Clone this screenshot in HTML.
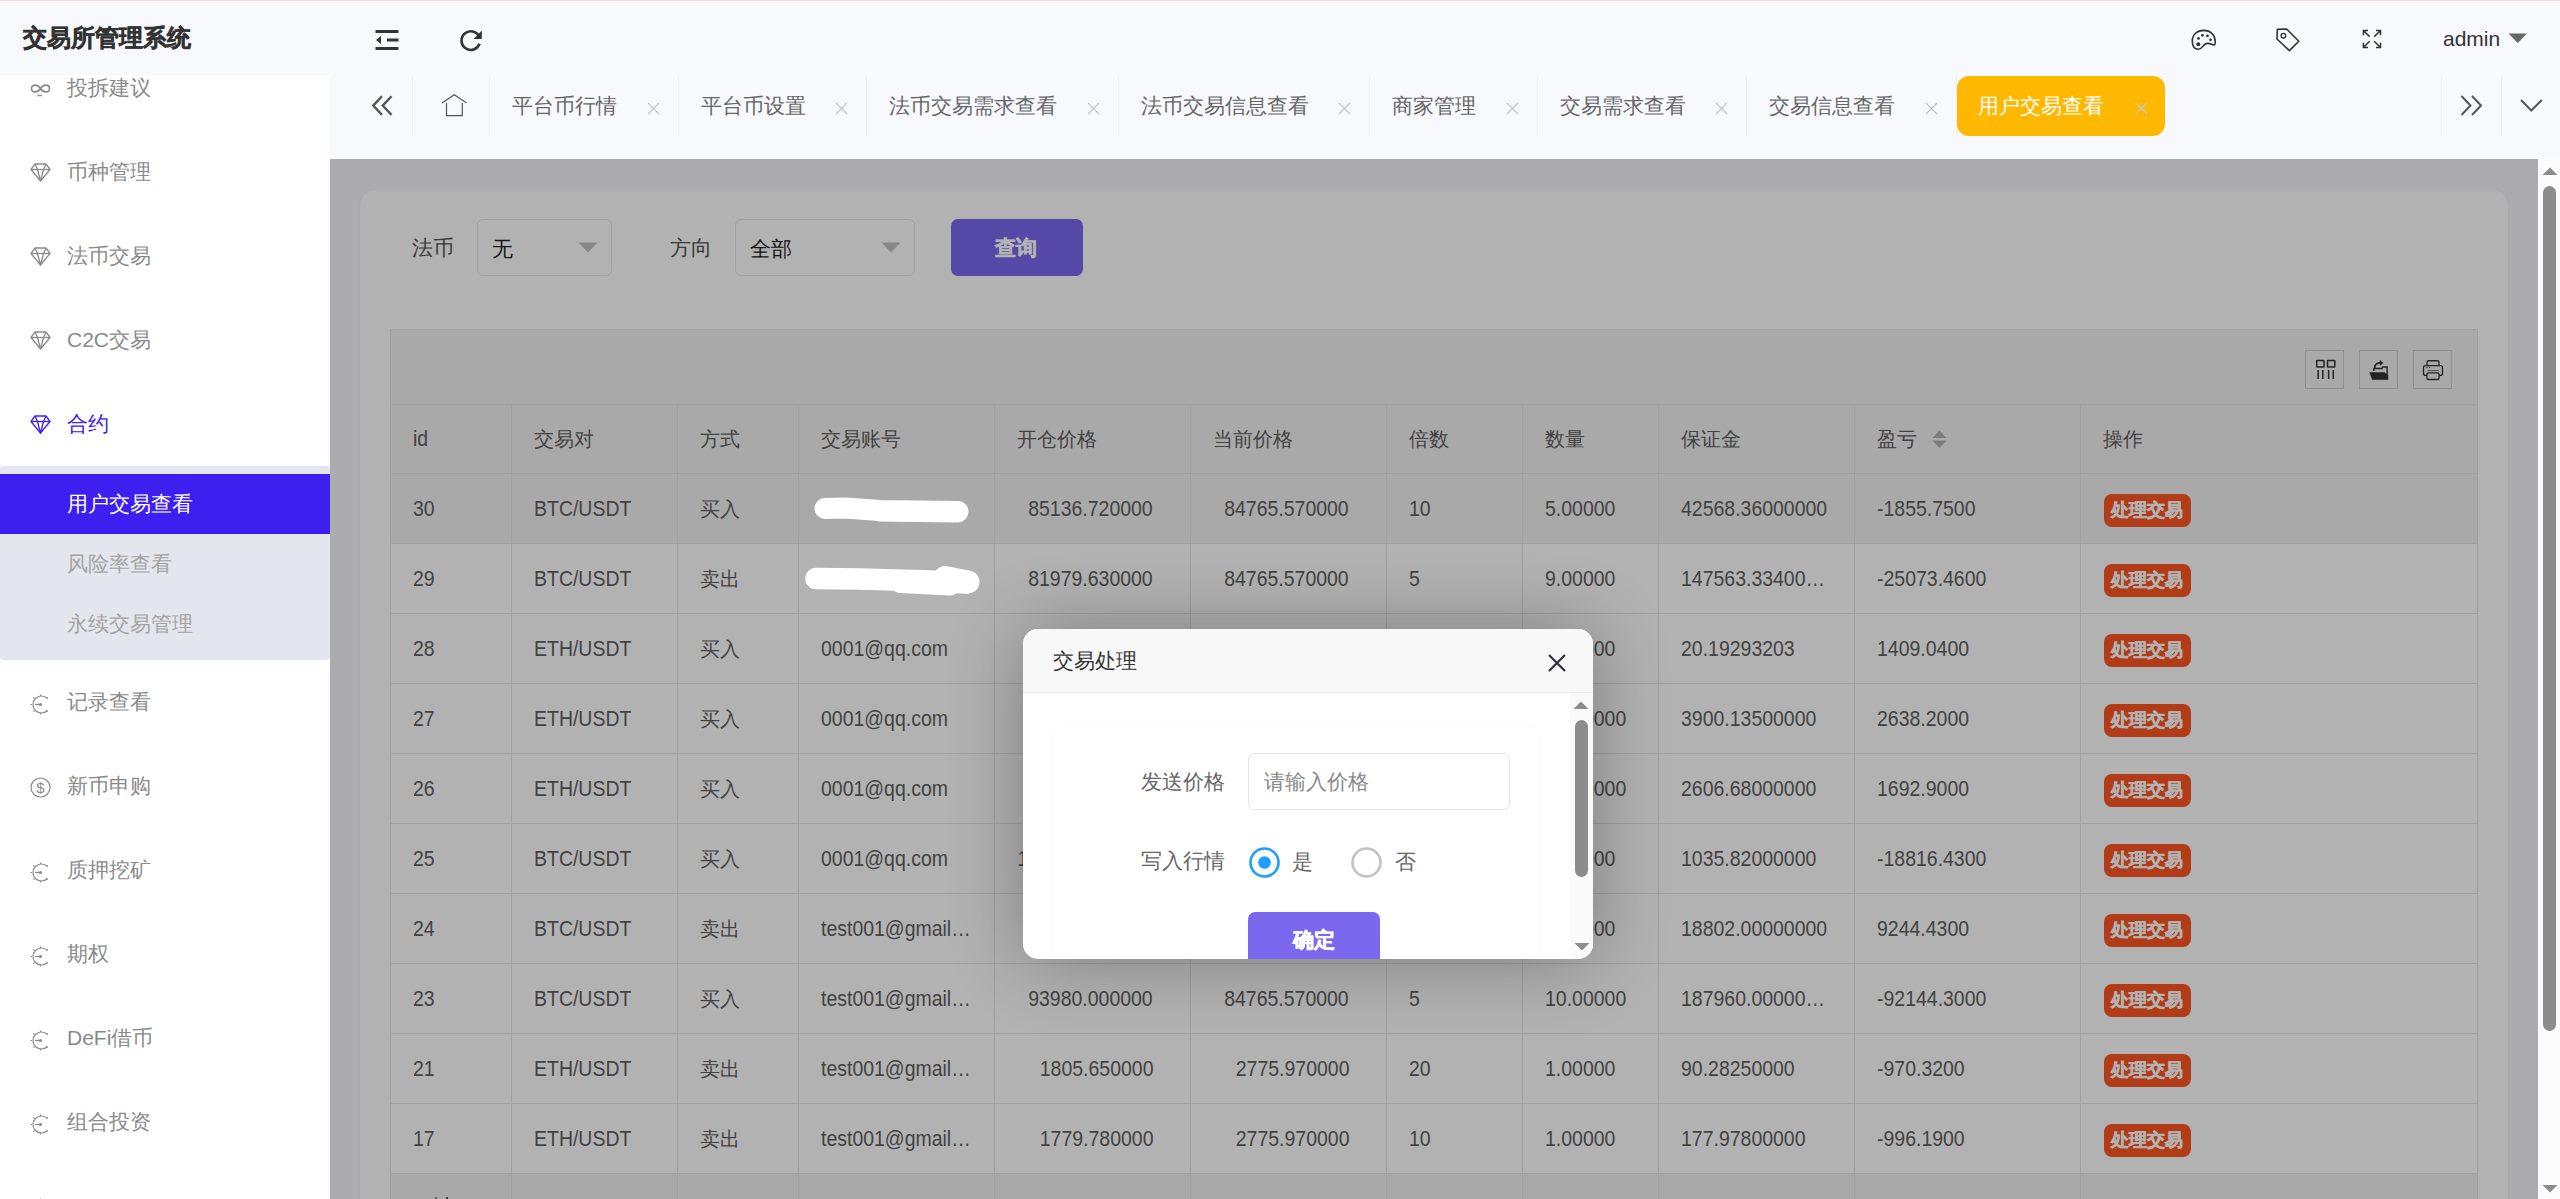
<!DOCTYPE html><html><head><meta charset="utf-8"><style>
*{margin:0;padding:0;box-sizing:border-box}
html,body{width:2560px;height:1199px;overflow:hidden;background:#fff;font-family:"Liberation Sans",sans-serif}
.t{position:absolute;white-space:nowrap}
.a{position:absolute}
svg{position:absolute;overflow:visible}
</style></head><body>
<div class="a" style="left:0;top:0;width:2560px;height:75px;background:#f8f9fd"></div>
<div class="a" style="left:0;top:0;width:2560px;height:1px;background:#f2d9dc"></div>
<div class="t" style="left:23px;top:20.875px;font-size:23.5px;line-height:35.25px;color:#333;font-weight:bold;-webkit-text-stroke:0.5px #333">交易所管理系统</div>
<svg style="left:375px;top:30px" width="24" height="20" viewBox="0 0 24 20"><rect x="0.5" y="0" width="23" height="3" fill="#333"/><rect x="12" y="8.5" width="11.5" height="3" fill="#333"/><path d="M1 10 L6 6 L6 14 Z" fill="#333"/><rect x="0.5" y="17" width="23" height="3" fill="#333"/></svg>
<svg style="left:459px;top:28px" width="26" height="24" viewBox="0 0 26 24"><path d="M20.2 8.5 A9.3 9.3 0 1 0 20.6 15.8" fill="none" stroke="#333" stroke-width="2.6"/><path d="M14.5 11 L22.8 11 L22.8 2.5 Z" fill="#333"/></svg>
<svg style="left:2185px;top:22px" width="40" height="34" viewBox="2185 22 40 34"><path d="M2198.5 49.3 C2194.5 49.3 2192.3 46 2192.3 41 C2192.3 34.5 2197 30.4 2204 30.4 C2210.5 30.4 2215.2 35 2215.2 41.5 C2215.2 43.5 2215 45 2214 45 C2212.5 45 2211 43.4 2207.5 43.4 C2203 43.4 2202.5 49.3 2198.5 49.3 Z" fill="none" stroke="#333" stroke-width="1.6"/><circle cx="2202.4" cy="35.3" r="1.4" fill="#333"/><circle cx="2207.5" cy="35.9" r="1.4" fill="#333"/><circle cx="2198.5" cy="38.4" r="1.4" fill="#333"/><circle cx="2210.5" cy="39.8" r="1.4" fill="#333"/><circle cx="2198.3" cy="44.2" r="2" fill="#333"/></svg>
<svg style="left:2268px;top:22px" width="40" height="34" viewBox="2268 22 40 34"><path d="M2277.3 29.4 L2286.6 29 L2298.8 41.3 L2289.4 50.6 L2277 39 Z" fill="none" stroke="#333" stroke-width="1.6" stroke-linejoin="round"/><circle cx="2283.4" cy="35.7" r="2.3" fill="none" stroke="#333" stroke-width="1.4"/></svg>
<svg style="left:2352px;top:22px" width="40" height="34" viewBox="2352 22 40 34"><g fill="none" stroke="#333" stroke-width="1.5"><path d="M2368 30.6 H2363.4 V35.2 M2363.6 30.8 L2369.6 36.6"/><path d="M2376 30.6 H2380.5 V35.2 M2380.3 30.8 L2374.2 36.6"/><path d="M2368 47.4 H2363.4 V42.8 M2363.6 47.2 L2369.6 41.3"/><path d="M2376 47.4 H2380.5 V42.8 M2380.3 47.2 L2374.2 41.3"/></g></svg>
<div class="t" style="left:2443px;top:23.25px;font-size:21px;line-height:31.5px;color:#333;font-weight:normal;">admin</div>
<svg style="left:2508px;top:33px" width="20" height="11" viewBox="0 0 20 11"><path d="M0.5 0.5 L19 0.5 L9.75 10 Z" fill="#666"/></svg>
<div class="a" style="left:0;top:75px;width:330px;height:1124px;background:#fff"></div>
<div class="a" style="left:0;top:466px;width:330px;height:194px;background:#e4e6ee;border-radius:3px"></div>
<div class="a" style="left:0;top:474px;width:330px;height:60px;background:#3d20f0"></div>
<svg style="left:30px;top:81.5px" width="21" height="16" viewBox="0 0 21 16"><path d="M10.5 6.5 C8 2 1.5 2 1.5 6.5 C1.5 11 8 11 10.5 6.5 C13 2 19.5 2 19.5 6.5 C19.5 11 13 11 10.5 6.5 Z" fill="none" stroke="#8a8a8a" stroke-width="1.6"/><path d="M7.5 13.5 H12" stroke="#8a8a8a" stroke-width="1.4"/></svg>
<div class="t" style="left:67px;top:71.75px;font-size:21px;line-height:31.5px;color:#8a8a8a;font-weight:normal;">投拆建议</div>
<svg style="left:30px;top:162.5px" width="21" height="19" viewBox="0 0 21 19"><g fill="none" stroke="#8a8a8a" stroke-width="1.3" stroke-linejoin="round"><path d="M5 1 H16 L20 6.5 L10.5 18 L1 6.5 Z"/><path d="M1 6.5 H20"/><path d="M5 1 L7.5 6.5 L10.5 18 L13.5 6.5 L16 1"/></g></svg>
<div class="t" style="left:67px;top:155.75px;font-size:21px;line-height:31.5px;color:#8a8a8a;font-weight:normal;">币种管理</div>
<svg style="left:30px;top:246.5px" width="21" height="19" viewBox="0 0 21 19"><g fill="none" stroke="#8a8a8a" stroke-width="1.3" stroke-linejoin="round"><path d="M5 1 H16 L20 6.5 L10.5 18 L1 6.5 Z"/><path d="M1 6.5 H20"/><path d="M5 1 L7.5 6.5 L10.5 18 L13.5 6.5 L16 1"/></g></svg>
<div class="t" style="left:67px;top:239.75px;font-size:21px;line-height:31.5px;color:#8a8a8a;font-weight:normal;">法币交易</div>
<svg style="left:30px;top:330.5px" width="21" height="19" viewBox="0 0 21 19"><g fill="none" stroke="#8a8a8a" stroke-width="1.3" stroke-linejoin="round"><path d="M5 1 H16 L20 6.5 L10.5 18 L1 6.5 Z"/><path d="M1 6.5 H20"/><path d="M5 1 L7.5 6.5 L10.5 18 L13.5 6.5 L16 1"/></g></svg>
<div class="t" style="left:67px;top:323.75px;font-size:21px;line-height:31.5px;color:#8a8a8a;font-weight:normal;">C2C交易</div>
<svg style="left:30px;top:414.5px" width="21" height="19" viewBox="0 0 21 19"><g fill="none" stroke="#3d20f0" stroke-width="1.3" stroke-linejoin="round"><path d="M5 1 H16 L20 6.5 L10.5 18 L1 6.5 Z"/><path d="M1 6.5 H20"/><path d="M5 1 L7.5 6.5 L10.5 18 L13.5 6.5 L16 1"/></g></svg>
<div class="t" style="left:67px;top:407.75px;font-size:21px;line-height:31.5px;color:#3d20f0;font-weight:normal;">合约</div>
<svg style="left:30px;top:693.5px" width="21" height="21" viewBox="0 0 21 21"><g fill="none" stroke="#8a8a8a" stroke-width="1.2"><path d="M17.5 4.5 A8.5 8.5 0 1 0 17.5 16.5"/><path d="M10.50 2.00 L10.50 0.50"/><path d="M4.49 4.49 L3.43 3.43"/><path d="M2.00 10.50 L0.50 10.50"/><path d="M4.49 16.51 L3.43 17.57"/><path d="M10.50 19.00 L10.50 20.50"/><path d="M16.51 4.49 L17.57 3.43"/><path d="M16.51 16.51 L17.57 17.57"/><path d="M5 10.5 H10"/></g><circle cx="10.5" cy="10.5" r="1.6" fill="#8a8a8a"/></svg>
<div class="t" style="left:67px;top:686.25px;font-size:21px;line-height:31.5px;color:#8a8a8a;font-weight:normal;">记录查看</div>
<svg style="left:30px;top:777px" width="21" height="21" viewBox="0 0 21 21"><circle cx="10.5" cy="10.5" r="9.5" fill="none" stroke="#8a8a8a" stroke-width="1.2"/><text x="10.5" y="15.5" text-anchor="middle" font-size="15" font-family="Liberation Sans" fill="#8a8a8a">$</text></svg>
<div class="t" style="left:67px;top:770.25px;font-size:21px;line-height:31.5px;color:#8a8a8a;font-weight:normal;">新币申购</div>
<svg style="left:30px;top:861.5px" width="21" height="21" viewBox="0 0 21 21"><g fill="none" stroke="#8a8a8a" stroke-width="1.2"><path d="M17.5 4.5 A8.5 8.5 0 1 0 17.5 16.5"/><path d="M10.50 2.00 L10.50 0.50"/><path d="M4.49 4.49 L3.43 3.43"/><path d="M2.00 10.50 L0.50 10.50"/><path d="M4.49 16.51 L3.43 17.57"/><path d="M10.50 19.00 L10.50 20.50"/><path d="M16.51 4.49 L17.57 3.43"/><path d="M16.51 16.51 L17.57 17.57"/><path d="M5 10.5 H10"/></g><circle cx="10.5" cy="10.5" r="1.6" fill="#8a8a8a"/></svg>
<div class="t" style="left:67px;top:854.25px;font-size:21px;line-height:31.5px;color:#8a8a8a;font-weight:normal;">质押挖矿</div>
<svg style="left:30px;top:945.5px" width="21" height="21" viewBox="0 0 21 21"><g fill="none" stroke="#8a8a8a" stroke-width="1.2"><path d="M17.5 4.5 A8.5 8.5 0 1 0 17.5 16.5"/><path d="M10.50 2.00 L10.50 0.50"/><path d="M4.49 4.49 L3.43 3.43"/><path d="M2.00 10.50 L0.50 10.50"/><path d="M4.49 16.51 L3.43 17.57"/><path d="M10.50 19.00 L10.50 20.50"/><path d="M16.51 4.49 L17.57 3.43"/><path d="M16.51 16.51 L17.57 17.57"/><path d="M5 10.5 H10"/></g><circle cx="10.5" cy="10.5" r="1.6" fill="#8a8a8a"/></svg>
<div class="t" style="left:67px;top:938.25px;font-size:21px;line-height:31.5px;color:#8a8a8a;font-weight:normal;">期权</div>
<svg style="left:30px;top:1029.5px" width="21" height="21" viewBox="0 0 21 21"><g fill="none" stroke="#8a8a8a" stroke-width="1.2"><path d="M17.5 4.5 A8.5 8.5 0 1 0 17.5 16.5"/><path d="M10.50 2.00 L10.50 0.50"/><path d="M4.49 4.49 L3.43 3.43"/><path d="M2.00 10.50 L0.50 10.50"/><path d="M4.49 16.51 L3.43 17.57"/><path d="M10.50 19.00 L10.50 20.50"/><path d="M16.51 4.49 L17.57 3.43"/><path d="M16.51 16.51 L17.57 17.57"/><path d="M5 10.5 H10"/></g><circle cx="10.5" cy="10.5" r="1.6" fill="#8a8a8a"/></svg>
<div class="t" style="left:67px;top:1022.25px;font-size:21px;line-height:31.5px;color:#8a8a8a;font-weight:normal;">DeFi借币</div>
<svg style="left:30px;top:1113.5px" width="21" height="21" viewBox="0 0 21 21"><g fill="none" stroke="#8a8a8a" stroke-width="1.2"><path d="M17.5 4.5 A8.5 8.5 0 1 0 17.5 16.5"/><path d="M10.50 2.00 L10.50 0.50"/><path d="M4.49 4.49 L3.43 3.43"/><path d="M2.00 10.50 L0.50 10.50"/><path d="M4.49 16.51 L3.43 17.57"/><path d="M10.50 19.00 L10.50 20.50"/><path d="M16.51 4.49 L17.57 3.43"/><path d="M16.51 16.51 L17.57 17.57"/><path d="M5 10.5 H10"/></g><circle cx="10.5" cy="10.5" r="1.6" fill="#8a8a8a"/></svg>
<div class="t" style="left:67px;top:1106.25px;font-size:21px;line-height:31.5px;color:#8a8a8a;font-weight:normal;">组合投资</div>
<svg style="left:30px;top:1197.5px" width="21" height="21" viewBox="0 0 21 21"><g fill="none" stroke="#8a8a8a" stroke-width="1.2"><path d="M17.5 4.5 A8.5 8.5 0 1 0 17.5 16.5"/><path d="M10.50 2.00 L10.50 0.50"/><path d="M4.49 4.49 L3.43 3.43"/><path d="M2.00 10.50 L0.50 10.50"/><path d="M4.49 16.51 L3.43 17.57"/><path d="M10.50 19.00 L10.50 20.50"/><path d="M16.51 4.49 L17.57 3.43"/><path d="M16.51 16.51 L17.57 17.57"/><path d="M5 10.5 H10"/></g><circle cx="10.5" cy="10.5" r="1.6" fill="#8a8a8a"/></svg>
<div class="t" style="left:67px;top:488.25px;font-size:21px;line-height:31.5px;color:#fff;font-weight:normal;">用户交易查看</div>
<div class="t" style="left:67px;top:547.75px;font-size:21px;line-height:31.5px;color:#a3a3a3;font-weight:normal;">风险率查看</div>
<div class="t" style="left:67px;top:607.75px;font-size:21px;line-height:31.5px;color:#a3a3a3;font-weight:normal;">永续交易管理</div>
<div class="a" style="left:0;top:0;width:330px;height:75px;background:#f8f9fd"></div>
<div class="t" style="left:23px;top:20.875px;font-size:23.5px;line-height:35.25px;color:#333;font-weight:bold;-webkit-text-stroke:0.5px #333">交易所管理系统</div>
<div class="a" style="left:0;top:0;width:330px;height:1px;background:#f2d9dc"></div>
<div class="a" style="left:330px;top:75px;width:2230px;height:84px;background:#f8f9fd"></div>
<div class="a" style="left:412px;top:76px;width:1px;height:60px;background:#efefef"></div>
<div class="a" style="left:489px;top:76px;width:1px;height:60px;background:#efefef"></div>
<svg style="left:371px;top:95px" width="23" height="22" viewBox="0 0 23 22"><g fill="none" stroke="#555" stroke-width="2.3"><path d="M11 1.3 L2.2 10.6 L11 19.9"/><path d="M20.5 1.3 L11.7 10.6 L20.5 19.9"/></g></svg>
<svg style="left:441px;top:94px" width="27" height="23" viewBox="0 0 27 23"><g fill="none" stroke="#555" stroke-width="1.2"><path d="M1 9 L13.3 0.8 L25.6 9"/><path d="M5.5 9 V21.7 H21.3 V9"/></g></svg>
<div class="t" style="left:512.0px;top:90.25px;font-size:21px;line-height:31.5px;color:#666;font-weight:normal;">平台币行情</div>
<svg style="left:646.57px;top:101.5px" width="13" height="13" viewBox="0 0 13 13"><path d="M1 1 L12 12 M12 1 L1 12" stroke="#c4c4c4" stroke-width="1.2"/></svg>
<div class="a" style="left:678px;top:76px;width:1px;height:60px;background:#efefef"></div>
<div class="t" style="left:700.5699999999999px;top:90.25px;font-size:21px;line-height:31.5px;color:#666;font-weight:normal;">平台币设置</div>
<svg style="left:835.14px;top:101.5px" width="13" height="13" viewBox="0 0 13 13"><path d="M1 1 L12 12 M12 1 L1 12" stroke="#c4c4c4" stroke-width="1.2"/></svg>
<div class="a" style="left:866px;top:76px;width:1px;height:60px;background:#efefef"></div>
<div class="t" style="left:889.1399999999999px;top:90.25px;font-size:21px;line-height:31.5px;color:#666;font-weight:normal;">法币交易需求查看</div>
<svg style="left:1086.71px;top:101.5px" width="13" height="13" viewBox="0 0 13 13"><path d="M1 1 L12 12 M12 1 L1 12" stroke="#c4c4c4" stroke-width="1.2"/></svg>
<div class="a" style="left:1118px;top:76px;width:1px;height:60px;background:#efefef"></div>
<div class="t" style="left:1140.7099999999998px;top:90.25px;font-size:21px;line-height:31.5px;color:#666;font-weight:normal;">法币交易信息查看</div>
<svg style="left:1338.28px;top:101.5px" width="13" height="13" viewBox="0 0 13 13"><path d="M1 1 L12 12 M12 1 L1 12" stroke="#c4c4c4" stroke-width="1.2"/></svg>
<div class="a" style="left:1369px;top:76px;width:1px;height:60px;background:#efefef"></div>
<div class="t" style="left:1392.2799999999997px;top:90.25px;font-size:21px;line-height:31.5px;color:#666;font-weight:normal;">商家管理</div>
<svg style="left:1505.85px;top:101.5px" width="13" height="13" viewBox="0 0 13 13"><path d="M1 1 L12 12 M12 1 L1 12" stroke="#c4c4c4" stroke-width="1.2"/></svg>
<div class="a" style="left:1537px;top:76px;width:1px;height:60px;background:#efefef"></div>
<div class="t" style="left:1559.8499999999997px;top:90.25px;font-size:21px;line-height:31.5px;color:#666;font-weight:normal;">交易需求查看</div>
<svg style="left:1715.42px;top:101.5px" width="13" height="13" viewBox="0 0 13 13"><path d="M1 1 L12 12 M12 1 L1 12" stroke="#c4c4c4" stroke-width="1.2"/></svg>
<div class="a" style="left:1746px;top:76px;width:1px;height:60px;background:#efefef"></div>
<div class="t" style="left:1769.4199999999996px;top:90.25px;font-size:21px;line-height:31.5px;color:#666;font-weight:normal;">交易信息查看</div>
<svg style="left:1924.99px;top:101.5px" width="13" height="13" viewBox="0 0 13 13"><path d="M1 1 L12 12 M12 1 L1 12" stroke="#c4c4c4" stroke-width="1.2"/></svg>
<div class="a" style="left:1956px;top:76px;width:1px;height:60px;background:#efefef"></div>
<div class="a" style="left:1957px;top:76px;width:208px;height:60px;background:#ffb800;border-radius:12px"></div>
<div class="t" style="left:1978px;top:90.25px;font-size:21px;line-height:31.5px;color:#fff;font-weight:normal;">用户交易查看</div>
<svg style="left:2134.5px;top:101.5px" width="13" height="13" viewBox="0 0 13 13"><path d="M1 1 L12 12 M12 1 L1 12" stroke="#c9c9c9" stroke-width="1.3"/></svg>
<div class="a" style="left:2441px;top:76px;width:1px;height:60px;background:#efefef"></div>
<div class="a" style="left:2501px;top:76px;width:1px;height:60px;background:#efefef"></div>
<svg style="left:2460px;top:95px" width="23" height="22" viewBox="0 0 23 22"><g fill="none" stroke="#555" stroke-width="2"><path d="M1.5 1 L10.5 10.5 L1.5 20"/><path d="M12 1 L21 10.5 L12 20"/></g></svg>
<svg style="left:2520px;top:99px" width="23" height="14" viewBox="0 0 23 14"><path d="M1 1 L11.3 11.5 L21.8 1" fill="none" stroke="#555" stroke-width="2"/></svg>
<div class="a" style="left:330px;top:159px;width:2208px;height:1040px;background:#f6f6f9;overflow:hidden">
<div class="a" style="left:29px;top:30px;width:2150px;height:1200px;background:#fff;border:1px solid #f3f4f8;border-radius:17px"></div>
<div class="t" style="left:82px;top:72.75px;font-size:21px;line-height:31.5px;color:#555;font-weight:normal;">法币</div>
<div class="a" style="left:147px;top:60px;width:135px;height:57px;border:1px solid #e6e6e6;border-radius:6px;background:#fff"></div>
<div class="t" style="left:162px;top:73.75px;font-size:21px;line-height:31.5px;color:#222;font-weight:normal;">无</div>
<svg style="left:248px;top:83px" width="20" height="11" viewBox="0 0 20 11"><path d="M0.5 0.5 L19.5 0.5 L10 10.5 Z" fill="#c2c2c2"/></svg>
<div class="t" style="left:340px;top:72.75px;font-size:21px;line-height:31.5px;color:#555;font-weight:normal;">方向</div>
<div class="a" style="left:405px;top:60px;width:180px;height:57px;border:1px solid #e6e6e6;border-radius:6px;background:#fff"></div>
<div class="t" style="left:420px;top:73.75px;font-size:21px;line-height:31.5px;color:#222;font-weight:normal;">全部</div>
<svg style="left:551px;top:83px" width="20" height="11" viewBox="0 0 20 11"><path d="M0.5 0.5 L19.5 0.5 L10 10.5 Z" fill="#c2c2c2"/></svg>
<div class="a" style="left:621px;top:60px;width:132px;height:57px;border-radius:7px;background:#7b68ee"></div>
<div class="t" style="left:665px;top:72.75px;font-size:21px;line-height:31.5px;color:#fff;font-weight:bold;-webkit-text-stroke:0.5px #fff">查询</div>
<div class="a" style="left:60px;top:170px;width:2088px;height:75px;background:#f2f2f2;border:1px solid #e6e6e6;border-bottom:none"></div>
<div class="a" style="left:1975px;top:191px;width:39px;height:39px;border:1px solid #ccc"></div>
<div class="a" style="left:2029px;top:191px;width:39px;height:39px;border:1px solid #ccc"></div>
<div class="a" style="left:2083px;top:191px;width:39px;height:39px;border:1px solid #ccc"></div>
<svg style="left:1980px;top:196px" width="30" height="30" viewBox="2310 355 30 30"><g fill="none" stroke="#333" stroke-width="1.5"><rect x="2316.7" y="360.5" width="7.3" height="6.6" rx="0.6"/><rect x="2327.5" y="360.5" width="7.3" height="6.6" rx="0.6"/></g><g stroke="#333" stroke-width="1.5"><path d="M2318.1 370 V379 M2322.8 370 V379 M2328.6 370 V379 M2333.3 370 V379"/></g></svg>
<svg style="left:2034px;top:196px" width="30" height="30" viewBox="2364 355 30 30"><path d="M2373.8 371 V368.5 H2382 L2382.6 367 H2387.1 V379" fill="none" stroke="#333" stroke-width="1.4"/><path d="M2369.7 372.6 H2384.2 L2387.9 375 V379.6 H2372.3 Z" fill="#333" stroke="#333" stroke-width="0.6" stroke-linejoin="round"/><path d="M2375 368 C2374.3 364.5 2377 362.8 2380.6 362.8" fill="none" stroke="#333" stroke-width="1.7"/><path d="M2379.8 359.8 L2383.3 362.9 L2379.8 366 Z" fill="#333"/></svg>
<svg style="left:2088px;top:196px" width="30" height="30" viewBox="2418 355 30 30"><g fill="none" stroke="#333" stroke-width="1.35"><path d="M2427 365.5 V362.5 Q2427 360.7 2428.8 360.7 H2437.2 Q2439 360.7 2439 362.5 V365.5"/><rect x="2423.5" y="365.6" width="19" height="9.8" rx="2"/></g><rect x="2426.9" y="372.9" width="12.2" height="6.6" rx="1.6" fill="#f2f2f2" stroke="#333" stroke-width="1.35"/><path d="M2426.3 367.6 H2427.6 M2428.9 367.6 H2430.2" stroke="#333" stroke-width="0.9"/><path d="M2427.5 370.6 H2439" stroke="#333" stroke-width="0.7"/></svg>
<div class="a" style="left:60px;top:245px;width:2088px;height:70px;background:#f2f2f2;border:1px solid #e6e6e6"></div>
<div class="t" style="left:83px;top:263.0px;font-size:22px;line-height:33px;color:#5f5f5f;transform:scaleX(0.885);transform-origin:0 50%">id</div>
<div class="t" style="left:204px;top:265.875px;font-size:19.5px;line-height:29.25px;color:#5f5f5f;font-weight:normal;">交易对</div>
<div class="t" style="left:370px;top:265.875px;font-size:19.5px;line-height:29.25px;color:#5f5f5f;font-weight:normal;">方式</div>
<div class="t" style="left:491px;top:265.875px;font-size:19.5px;line-height:29.25px;color:#5f5f5f;font-weight:normal;">交易账号</div>
<div class="t" style="left:687px;top:265.875px;font-size:19.5px;line-height:29.25px;color:#5f5f5f;font-weight:normal;">开仓价格</div>
<div class="t" style="left:883px;top:265.875px;font-size:19.5px;line-height:29.25px;color:#5f5f5f;font-weight:normal;">当前价格</div>
<div class="t" style="left:1079px;top:265.875px;font-size:19.5px;line-height:29.25px;color:#5f5f5f;font-weight:normal;">倍数</div>
<div class="t" style="left:1215px;top:265.875px;font-size:19.5px;line-height:29.25px;color:#5f5f5f;font-weight:normal;">数量</div>
<div class="t" style="left:1351px;top:265.875px;font-size:19.5px;line-height:29.25px;color:#5f5f5f;font-weight:normal;">保证金</div>
<div class="t" style="left:1547px;top:265.875px;font-size:19.5px;line-height:29.25px;color:#5f5f5f;font-weight:normal;">盈亏</div>
<div class="t" style="left:1773px;top:265.875px;font-size:19.5px;line-height:29.25px;color:#5f5f5f;font-weight:normal;">操作</div>
<svg style="left:1602px;top:271px" width="15" height="19" viewBox="0 0 15 19"><path d="M0.5 8 L7.5 0.5 L14.5 8 Z M0.5 10.5 L14.5 10.5 L7.5 18 Z" fill="#b2b2b2"/></svg>
<div class="a" style="left:60px;top:314px;width:2088px;height:71px;background:#f2f2f2;border:1px solid #e6e6e6"></div>
<div class="t" style="left:83px;top:333.0px;font-size:22px;line-height:33px;color:#5f5f5f;transform:scaleX(0.885);transform-origin:0 50%">30</div>
<div class="t" style="left:204px;top:333.0px;font-size:22px;line-height:33px;color:#5f5f5f;transform:scaleX(0.885);transform-origin:0 50%">BTC/USDT</div>
<div class="t" style="left:370px;top:335.875px;font-size:19.5px;line-height:29.25px;color:#5f5f5f;font-weight:normal;">买入</div>
<div class="t" style="left:664px;width:159px;text-align:right;top:333.0px;font-size:22px;line-height:33px;color:#5f5f5f"><span style="display:inline-block;transform:scaleX(0.885);transform-origin:100% 50%">85136.720000</span></div>
<div class="t" style="left:860px;width:159px;text-align:right;top:333.0px;font-size:22px;line-height:33px;color:#5f5f5f"><span style="display:inline-block;transform:scaleX(0.885);transform-origin:100% 50%">84765.570000</span></div>
<div class="t" style="left:1079px;top:333.0px;font-size:22px;line-height:33px;color:#5f5f5f;transform:scaleX(0.885);transform-origin:0 50%">10</div>
<div class="t" style="left:1215px;top:333.0px;font-size:22px;line-height:33px;color:#5f5f5f;transform:scaleX(0.885);transform-origin:0 50%">5.00000</div>
<div class="t" style="left:1351px;top:333.0px;font-size:22px;line-height:33px;color:#5f5f5f;transform:scaleX(0.885);transform-origin:0 50%">42568.36000000</div>
<div class="t" style="left:1547px;top:333.0px;font-size:22px;line-height:33px;color:#5f5f5f;transform:scaleX(0.885);transform-origin:0 50%">-1855.7500</div>
<div class="a" style="left:1774px;top:335px;width:87px;height:33px;background:#ff5722;border-radius:8px"></div>
<div class="t" style="left:1781px;top:337.5px;font-size:18px;line-height:27.0px;color:#fff;font-weight:bold;-webkit-text-stroke:0.5px #fff">处理交易</div>
<div class="a" style="left:60px;top:384px;width:2088px;height:71px;background:#fff;border:1px solid #e6e6e6"></div>
<div class="t" style="left:83px;top:403.0px;font-size:22px;line-height:33px;color:#5f5f5f;transform:scaleX(0.885);transform-origin:0 50%">29</div>
<div class="t" style="left:204px;top:403.0px;font-size:22px;line-height:33px;color:#5f5f5f;transform:scaleX(0.885);transform-origin:0 50%">BTC/USDT</div>
<div class="t" style="left:370px;top:405.875px;font-size:19.5px;line-height:29.25px;color:#5f5f5f;font-weight:normal;">卖出</div>
<div class="t" style="left:664px;width:159px;text-align:right;top:403.0px;font-size:22px;line-height:33px;color:#5f5f5f"><span style="display:inline-block;transform:scaleX(0.885);transform-origin:100% 50%">81979.630000</span></div>
<div class="t" style="left:860px;width:159px;text-align:right;top:403.0px;font-size:22px;line-height:33px;color:#5f5f5f"><span style="display:inline-block;transform:scaleX(0.885);transform-origin:100% 50%">84765.570000</span></div>
<div class="t" style="left:1079px;top:403.0px;font-size:22px;line-height:33px;color:#5f5f5f;transform:scaleX(0.885);transform-origin:0 50%">5</div>
<div class="t" style="left:1215px;top:403.0px;font-size:22px;line-height:33px;color:#5f5f5f;transform:scaleX(0.885);transform-origin:0 50%">9.00000</div>
<div class="t" style="left:1351px;top:403.0px;font-size:22px;line-height:33px;color:#5f5f5f;transform:scaleX(0.885);transform-origin:0 50%">147563.33400…</div>
<div class="t" style="left:1547px;top:403.0px;font-size:22px;line-height:33px;color:#5f5f5f;transform:scaleX(0.885);transform-origin:0 50%">-25073.4600</div>
<div class="a" style="left:1774px;top:405px;width:87px;height:33px;background:#ff5722;border-radius:8px"></div>
<div class="t" style="left:1781px;top:407.5px;font-size:18px;line-height:27.0px;color:#fff;font-weight:bold;-webkit-text-stroke:0.5px #fff">处理交易</div>
<div class="a" style="left:60px;top:454px;width:2088px;height:71px;background:#fff;border:1px solid #e6e6e6"></div>
<div class="t" style="left:83px;top:473.0px;font-size:22px;line-height:33px;color:#5f5f5f;transform:scaleX(0.885);transform-origin:0 50%">28</div>
<div class="t" style="left:204px;top:473.0px;font-size:22px;line-height:33px;color:#5f5f5f;transform:scaleX(0.885);transform-origin:0 50%">ETH/USDT</div>
<div class="t" style="left:370px;top:475.875px;font-size:19.5px;line-height:29.25px;color:#5f5f5f;font-weight:normal;">买入</div>
<div class="t" style="left:491px;top:473.0px;font-size:22px;line-height:33px;color:#5f5f5f;transform:scaleX(0.885);transform-origin:0 50%">0001@qq.com</div>
<div class="t" style="left:664px;width:159px;text-align:right;top:473.0px;font-size:22px;line-height:33px;color:#5f5f5f"><span style="display:inline-block;transform:scaleX(0.885);transform-origin:100% 50%">2019.293200</span></div>
<div class="t" style="left:860px;width:159px;text-align:right;top:473.0px;font-size:22px;line-height:33px;color:#5f5f5f"><span style="display:inline-block;transform:scaleX(0.885);transform-origin:100% 50%">2775.970000</span></div>
<div class="t" style="left:1079px;top:473.0px;font-size:22px;line-height:33px;color:#5f5f5f;transform:scaleX(0.885);transform-origin:0 50%">5</div>
<div class="t" style="left:1215px;top:473.0px;font-size:22px;line-height:33px;color:#5f5f5f;transform:scaleX(0.885);transform-origin:0 50%">1.00000</div>
<div class="t" style="left:1351px;top:473.0px;font-size:22px;line-height:33px;color:#5f5f5f;transform:scaleX(0.885);transform-origin:0 50%">20.19293203</div>
<div class="t" style="left:1547px;top:473.0px;font-size:22px;line-height:33px;color:#5f5f5f;transform:scaleX(0.885);transform-origin:0 50%">1409.0400</div>
<div class="a" style="left:1774px;top:475px;width:87px;height:33px;background:#ff5722;border-radius:8px"></div>
<div class="t" style="left:1781px;top:477.5px;font-size:18px;line-height:27.0px;color:#fff;font-weight:bold;-webkit-text-stroke:0.5px #fff">处理交易</div>
<div class="a" style="left:60px;top:524px;width:2088px;height:71px;background:#fff;border:1px solid #e6e6e6"></div>
<div class="t" style="left:83px;top:543.0px;font-size:22px;line-height:33px;color:#5f5f5f;transform:scaleX(0.885);transform-origin:0 50%">27</div>
<div class="t" style="left:204px;top:543.0px;font-size:22px;line-height:33px;color:#5f5f5f;transform:scaleX(0.885);transform-origin:0 50%">ETH/USDT</div>
<div class="t" style="left:370px;top:545.875px;font-size:19.5px;line-height:29.25px;color:#5f5f5f;font-weight:normal;">买入</div>
<div class="t" style="left:491px;top:543.0px;font-size:22px;line-height:33px;color:#5f5f5f;transform:scaleX(0.885);transform-origin:0 50%">0001@qq.com</div>
<div class="t" style="left:664px;width:159px;text-align:right;top:543.0px;font-size:22px;line-height:33px;color:#5f5f5f"><span style="display:inline-block;transform:scaleX(0.885);transform-origin:100% 50%">1950.067500</span></div>
<div class="t" style="left:860px;width:159px;text-align:right;top:543.0px;font-size:22px;line-height:33px;color:#5f5f5f"><span style="display:inline-block;transform:scaleX(0.885);transform-origin:100% 50%">2775.970000</span></div>
<div class="t" style="left:1079px;top:543.0px;font-size:22px;line-height:33px;color:#5f5f5f;transform:scaleX(0.885);transform-origin:0 50%">5</div>
<div class="t" style="left:1215px;top:543.0px;font-size:22px;line-height:33px;color:#5f5f5f;transform:scaleX(0.885);transform-origin:0 50%">10.00000</div>
<div class="t" style="left:1351px;top:543.0px;font-size:22px;line-height:33px;color:#5f5f5f;transform:scaleX(0.885);transform-origin:0 50%">3900.13500000</div>
<div class="t" style="left:1547px;top:543.0px;font-size:22px;line-height:33px;color:#5f5f5f;transform:scaleX(0.885);transform-origin:0 50%">2638.2000</div>
<div class="a" style="left:1774px;top:545px;width:87px;height:33px;background:#ff5722;border-radius:8px"></div>
<div class="t" style="left:1781px;top:547.5px;font-size:18px;line-height:27.0px;color:#fff;font-weight:bold;-webkit-text-stroke:0.5px #fff">处理交易</div>
<div class="a" style="left:60px;top:594px;width:2088px;height:71px;background:#fff;border:1px solid #e6e6e6"></div>
<div class="t" style="left:83px;top:613.0px;font-size:22px;line-height:33px;color:#5f5f5f;transform:scaleX(0.885);transform-origin:0 50%">26</div>
<div class="t" style="left:204px;top:613.0px;font-size:22px;line-height:33px;color:#5f5f5f;transform:scaleX(0.885);transform-origin:0 50%">ETH/USDT</div>
<div class="t" style="left:370px;top:615.875px;font-size:19.5px;line-height:29.25px;color:#5f5f5f;font-weight:normal;">买入</div>
<div class="t" style="left:491px;top:613.0px;font-size:22px;line-height:33px;color:#5f5f5f;transform:scaleX(0.885);transform-origin:0 50%">0001@qq.com</div>
<div class="t" style="left:664px;width:159px;text-align:right;top:613.0px;font-size:22px;line-height:33px;color:#5f5f5f"><span style="display:inline-block;transform:scaleX(0.885);transform-origin:100% 50%">1303.340000</span></div>
<div class="t" style="left:860px;width:159px;text-align:right;top:613.0px;font-size:22px;line-height:33px;color:#5f5f5f"><span style="display:inline-block;transform:scaleX(0.885);transform-origin:100% 50%">2775.970000</span></div>
<div class="t" style="left:1079px;top:613.0px;font-size:22px;line-height:33px;color:#5f5f5f;transform:scaleX(0.885);transform-origin:0 50%">5</div>
<div class="t" style="left:1215px;top:613.0px;font-size:22px;line-height:33px;color:#5f5f5f;transform:scaleX(0.885);transform-origin:0 50%">10.00000</div>
<div class="t" style="left:1351px;top:613.0px;font-size:22px;line-height:33px;color:#5f5f5f;transform:scaleX(0.885);transform-origin:0 50%">2606.68000000</div>
<div class="t" style="left:1547px;top:613.0px;font-size:22px;line-height:33px;color:#5f5f5f;transform:scaleX(0.885);transform-origin:0 50%">1692.9000</div>
<div class="a" style="left:1774px;top:615px;width:87px;height:33px;background:#ff5722;border-radius:8px"></div>
<div class="t" style="left:1781px;top:617.5px;font-size:18px;line-height:27.0px;color:#fff;font-weight:bold;-webkit-text-stroke:0.5px #fff">处理交易</div>
<div class="a" style="left:60px;top:664px;width:2088px;height:71px;background:#fff;border:1px solid #e6e6e6"></div>
<div class="t" style="left:83px;top:683.0px;font-size:22px;line-height:33px;color:#5f5f5f;transform:scaleX(0.885);transform-origin:0 50%">25</div>
<div class="t" style="left:204px;top:683.0px;font-size:22px;line-height:33px;color:#5f5f5f;transform:scaleX(0.885);transform-origin:0 50%">BTC/USDT</div>
<div class="t" style="left:370px;top:685.875px;font-size:19.5px;line-height:29.25px;color:#5f5f5f;font-weight:normal;">买入</div>
<div class="t" style="left:491px;top:683.0px;font-size:22px;line-height:33px;color:#5f5f5f;transform:scaleX(0.885);transform-origin:0 50%">0001@qq.com</div>
<div class="t" style="left:664px;width:159px;text-align:right;top:683.0px;font-size:22px;line-height:33px;color:#5f5f5f"><span style="display:inline-block;transform:scaleX(0.885);transform-origin:100% 50%">103582.000000</span></div>
<div class="t" style="left:860px;width:159px;text-align:right;top:683.0px;font-size:22px;line-height:33px;color:#5f5f5f"><span style="display:inline-block;transform:scaleX(0.885);transform-origin:100% 50%">84765.570000</span></div>
<div class="t" style="left:1079px;top:683.0px;font-size:22px;line-height:33px;color:#5f5f5f;transform:scaleX(0.885);transform-origin:0 50%">1</div>
<div class="t" style="left:1215px;top:683.0px;font-size:22px;line-height:33px;color:#5f5f5f;transform:scaleX(0.885);transform-origin:0 50%">1.00000</div>
<div class="t" style="left:1351px;top:683.0px;font-size:22px;line-height:33px;color:#5f5f5f;transform:scaleX(0.885);transform-origin:0 50%">1035.82000000</div>
<div class="t" style="left:1547px;top:683.0px;font-size:22px;line-height:33px;color:#5f5f5f;transform:scaleX(0.885);transform-origin:0 50%">-18816.4300</div>
<div class="a" style="left:1774px;top:685px;width:87px;height:33px;background:#ff5722;border-radius:8px"></div>
<div class="t" style="left:1781px;top:687.5px;font-size:18px;line-height:27.0px;color:#fff;font-weight:bold;-webkit-text-stroke:0.5px #fff">处理交易</div>
<div class="a" style="left:60px;top:734px;width:2088px;height:71px;background:#fff;border:1px solid #e6e6e6"></div>
<div class="t" style="left:83px;top:753.0px;font-size:22px;line-height:33px;color:#5f5f5f;transform:scaleX(0.885);transform-origin:0 50%">24</div>
<div class="t" style="left:204px;top:753.0px;font-size:22px;line-height:33px;color:#5f5f5f;transform:scaleX(0.885);transform-origin:0 50%">BTC/USDT</div>
<div class="t" style="left:370px;top:755.875px;font-size:19.5px;line-height:29.25px;color:#5f5f5f;font-weight:normal;">卖出</div>
<div class="t" style="left:491px;top:753.0px;font-size:22px;line-height:33px;color:#5f5f5f;transform:scaleX(0.885);transform-origin:0 50%">test001@gmail…</div>
<div class="t" style="left:664px;width:159px;text-align:right;top:753.0px;font-size:22px;line-height:33px;color:#5f5f5f"><span style="display:inline-block;transform:scaleX(0.885);transform-origin:100% 50%">94010.000000</span></div>
<div class="t" style="left:860px;width:159px;text-align:right;top:753.0px;font-size:22px;line-height:33px;color:#5f5f5f"><span style="display:inline-block;transform:scaleX(0.885);transform-origin:100% 50%">84765.570000</span></div>
<div class="t" style="left:1079px;top:753.0px;font-size:22px;line-height:33px;color:#5f5f5f;transform:scaleX(0.885);transform-origin:0 50%">5</div>
<div class="t" style="left:1215px;top:753.0px;font-size:22px;line-height:33px;color:#5f5f5f;transform:scaleX(0.885);transform-origin:0 50%">1.00000</div>
<div class="t" style="left:1351px;top:753.0px;font-size:22px;line-height:33px;color:#5f5f5f;transform:scaleX(0.885);transform-origin:0 50%">18802.00000000</div>
<div class="t" style="left:1547px;top:753.0px;font-size:22px;line-height:33px;color:#5f5f5f;transform:scaleX(0.885);transform-origin:0 50%">9244.4300</div>
<div class="a" style="left:1774px;top:755px;width:87px;height:33px;background:#ff5722;border-radius:8px"></div>
<div class="t" style="left:1781px;top:757.5px;font-size:18px;line-height:27.0px;color:#fff;font-weight:bold;-webkit-text-stroke:0.5px #fff">处理交易</div>
<div class="a" style="left:60px;top:804px;width:2088px;height:71px;background:#fff;border:1px solid #e6e6e6"></div>
<div class="t" style="left:83px;top:823.0px;font-size:22px;line-height:33px;color:#5f5f5f;transform:scaleX(0.885);transform-origin:0 50%">23</div>
<div class="t" style="left:204px;top:823.0px;font-size:22px;line-height:33px;color:#5f5f5f;transform:scaleX(0.885);transform-origin:0 50%">BTC/USDT</div>
<div class="t" style="left:370px;top:825.875px;font-size:19.5px;line-height:29.25px;color:#5f5f5f;font-weight:normal;">买入</div>
<div class="t" style="left:491px;top:823.0px;font-size:22px;line-height:33px;color:#5f5f5f;transform:scaleX(0.885);transform-origin:0 50%">test001@gmail…</div>
<div class="t" style="left:664px;width:159px;text-align:right;top:823.0px;font-size:22px;line-height:33px;color:#5f5f5f"><span style="display:inline-block;transform:scaleX(0.885);transform-origin:100% 50%">93980.000000</span></div>
<div class="t" style="left:860px;width:159px;text-align:right;top:823.0px;font-size:22px;line-height:33px;color:#5f5f5f"><span style="display:inline-block;transform:scaleX(0.885);transform-origin:100% 50%">84765.570000</span></div>
<div class="t" style="left:1079px;top:823.0px;font-size:22px;line-height:33px;color:#5f5f5f;transform:scaleX(0.885);transform-origin:0 50%">5</div>
<div class="t" style="left:1215px;top:823.0px;font-size:22px;line-height:33px;color:#5f5f5f;transform:scaleX(0.885);transform-origin:0 50%">10.00000</div>
<div class="t" style="left:1351px;top:823.0px;font-size:22px;line-height:33px;color:#5f5f5f;transform:scaleX(0.885);transform-origin:0 50%">187960.00000…</div>
<div class="t" style="left:1547px;top:823.0px;font-size:22px;line-height:33px;color:#5f5f5f;transform:scaleX(0.885);transform-origin:0 50%">-92144.3000</div>
<div class="a" style="left:1774px;top:825px;width:87px;height:33px;background:#ff5722;border-radius:8px"></div>
<div class="t" style="left:1781px;top:827.5px;font-size:18px;line-height:27.0px;color:#fff;font-weight:bold;-webkit-text-stroke:0.5px #fff">处理交易</div>
<div class="a" style="left:60px;top:874px;width:2088px;height:71px;background:#fff;border:1px solid #e6e6e6"></div>
<div class="t" style="left:83px;top:893.0px;font-size:22px;line-height:33px;color:#5f5f5f;transform:scaleX(0.885);transform-origin:0 50%">21</div>
<div class="t" style="left:204px;top:893.0px;font-size:22px;line-height:33px;color:#5f5f5f;transform:scaleX(0.885);transform-origin:0 50%">ETH/USDT</div>
<div class="t" style="left:370px;top:895.875px;font-size:19.5px;line-height:29.25px;color:#5f5f5f;font-weight:normal;">卖出</div>
<div class="t" style="left:491px;top:893.0px;font-size:22px;line-height:33px;color:#5f5f5f;transform:scaleX(0.885);transform-origin:0 50%">test001@gmail…</div>
<div class="t" style="left:664px;width:159px;text-align:right;top:893.0px;font-size:22px;line-height:33px;color:#5f5f5f"><span style="display:inline-block;transform:scaleX(0.885);transform-origin:100% 50%">1805.650000</span></div>
<div class="t" style="left:860px;width:159px;text-align:right;top:893.0px;font-size:22px;line-height:33px;color:#5f5f5f"><span style="display:inline-block;transform:scaleX(0.885);transform-origin:100% 50%">2775.970000</span></div>
<div class="t" style="left:1079px;top:893.0px;font-size:22px;line-height:33px;color:#5f5f5f;transform:scaleX(0.885);transform-origin:0 50%">20</div>
<div class="t" style="left:1215px;top:893.0px;font-size:22px;line-height:33px;color:#5f5f5f;transform:scaleX(0.885);transform-origin:0 50%">1.00000</div>
<div class="t" style="left:1351px;top:893.0px;font-size:22px;line-height:33px;color:#5f5f5f;transform:scaleX(0.885);transform-origin:0 50%">90.28250000</div>
<div class="t" style="left:1547px;top:893.0px;font-size:22px;line-height:33px;color:#5f5f5f;transform:scaleX(0.885);transform-origin:0 50%">-970.3200</div>
<div class="a" style="left:1774px;top:895px;width:87px;height:33px;background:#ff5722;border-radius:8px"></div>
<div class="t" style="left:1781px;top:897.5px;font-size:18px;line-height:27.0px;color:#fff;font-weight:bold;-webkit-text-stroke:0.5px #fff">处理交易</div>
<div class="a" style="left:60px;top:944px;width:2088px;height:71px;background:#fff;border:1px solid #e6e6e6"></div>
<div class="t" style="left:83px;top:963.0px;font-size:22px;line-height:33px;color:#5f5f5f;transform:scaleX(0.885);transform-origin:0 50%">17</div>
<div class="t" style="left:204px;top:963.0px;font-size:22px;line-height:33px;color:#5f5f5f;transform:scaleX(0.885);transform-origin:0 50%">ETH/USDT</div>
<div class="t" style="left:370px;top:965.875px;font-size:19.5px;line-height:29.25px;color:#5f5f5f;font-weight:normal;">卖出</div>
<div class="t" style="left:491px;top:963.0px;font-size:22px;line-height:33px;color:#5f5f5f;transform:scaleX(0.885);transform-origin:0 50%">test001@gmail…</div>
<div class="t" style="left:664px;width:159px;text-align:right;top:963.0px;font-size:22px;line-height:33px;color:#5f5f5f"><span style="display:inline-block;transform:scaleX(0.885);transform-origin:100% 50%">1779.780000</span></div>
<div class="t" style="left:860px;width:159px;text-align:right;top:963.0px;font-size:22px;line-height:33px;color:#5f5f5f"><span style="display:inline-block;transform:scaleX(0.885);transform-origin:100% 50%">2775.970000</span></div>
<div class="t" style="left:1079px;top:963.0px;font-size:22px;line-height:33px;color:#5f5f5f;transform:scaleX(0.885);transform-origin:0 50%">10</div>
<div class="t" style="left:1215px;top:963.0px;font-size:22px;line-height:33px;color:#5f5f5f;transform:scaleX(0.885);transform-origin:0 50%">1.00000</div>
<div class="t" style="left:1351px;top:963.0px;font-size:22px;line-height:33px;color:#5f5f5f;transform:scaleX(0.885);transform-origin:0 50%">177.97800000</div>
<div class="t" style="left:1547px;top:963.0px;font-size:22px;line-height:33px;color:#5f5f5f;transform:scaleX(0.885);transform-origin:0 50%">-996.1900</div>
<div class="a" style="left:1774px;top:965px;width:87px;height:33px;background:#ff5722;border-radius:8px"></div>
<div class="t" style="left:1781px;top:967.5px;font-size:18px;line-height:27.0px;color:#fff;font-weight:bold;-webkit-text-stroke:0.5px #fff">处理交易</div>
<div class="a" style="left:60px;top:1014px;width:2088px;height:71px;background:#f2f2f2;border:1px solid #e6e6e6"></div>
<div class="a" style="left:105px;top:1038px;width:2px;height:2px;background:#8a8a8a"></div>
<div class="a" style="left:116px;top:1038px;width:2px;height:2px;background:#555"></div>
<div class="a" style="left:181px;top:245px;width:1px;height:900px;background:#e6e6e6"></div>
<div class="a" style="left:347px;top:245px;width:1px;height:900px;background:#e6e6e6"></div>
<div class="a" style="left:468px;top:245px;width:1px;height:900px;background:#e6e6e6"></div>
<div class="a" style="left:664px;top:245px;width:1px;height:900px;background:#e6e6e6"></div>
<div class="a" style="left:860px;top:245px;width:1px;height:900px;background:#e6e6e6"></div>
<div class="a" style="left:1056px;top:245px;width:1px;height:900px;background:#e6e6e6"></div>
<div class="a" style="left:1192px;top:245px;width:1px;height:900px;background:#e6e6e6"></div>
<div class="a" style="left:1328px;top:245px;width:1px;height:900px;background:#e6e6e6"></div>
<div class="a" style="left:1524px;top:245px;width:1px;height:900px;background:#e6e6e6"></div>
<div class="a" style="left:1750px;top:245px;width:1px;height:900px;background:#e6e6e6"></div>
<div class="a" style="left:0;top:0;width:2208px;height:1040px;background:rgba(0,0,0,0.3)"></div>
<svg style="left:0;top:0" width="2208" height="1040" viewBox="330 159 2208 1040"><g fill="none" stroke="#fff" stroke-linecap="round" stroke-linejoin="round"><path d="M825 508.5 L845 508 L880 510.5 L958 511.5" stroke-width="21"/><path d="M880 512 L958 513" stroke-width="19"/><path d="M816 578.5 L860 579 L930 581 L966 583" stroke-width="21.5"/><path d="M945 577.5 L968 582" stroke-width="23"/><path d="M900 583 L950 585.5" stroke-width="20"/></g></svg>
<div class="a" style="left:693px;top:470px;width:570px;height:330px;background:#fff;border-radius:15px;box-shadow:1px 1px 75px rgba(0,0,0,0.3);overflow:hidden">
<div class="a" style="left:0;top:0;width:570px;height:64px;background:#f8f8f8;border-bottom:1px solid #eee"></div>
<div class="t" style="left:30px;top:16.25px;font-size:21px;line-height:31.5px;color:#333">交易处理</div>
<svg style="left:525px;top:25px" width="18" height="18" viewBox="0 0 18 18"><path d="M1 1 L17 17 M17 1 L1 17" stroke="#2e2d3d" stroke-width="2.2"/></svg>
<div class="a" style="left:547px;top:64px;width:23px;height:266px;background:#fafafa"></div>
<svg style="left:550px;top:72px" width="16" height="8" viewBox="0 0 16 8"><path d="M0.5 8 L8 0.5 L15.5 8 Z" fill="#8c8c8c"/></svg>
<div class="a" style="left:552px;top:91px;width:13px;height:157px;background:#8c8c8c;border-radius:7px"></div>
<svg style="left:550.5px;top:314px" width="16" height="8" viewBox="0 0 16 8"><path d="M0.5 0 L15.5 0 L8 7.5 Z" fill="#8c8c8c"/></svg>
<div class="a" style="left:29px;top:93px;width:489px;height:400px;border:1px solid #fafafa;border-radius:18px"></div>
<div class="t" style="left:118px;top:137.25px;font-size:21px;line-height:31.5px;color:#666">发送价格</div>
<div class="a" style="left:225px;top:124px;width:262px;height:57px;border:1px solid #e6e6e6;border-radius:6px"></div>
<div class="t" style="left:241px;top:137.25px;font-size:21px;line-height:31.5px;color:#888">请输入价格</div>
<div class="t" style="left:118px;top:216.25px;font-size:21px;line-height:31.5px;color:#666">写入行情</div>
<svg style="left:226px;top:218px" width="31" height="31" viewBox="0 0 31 31"><circle cx="15.5" cy="15.5" r="14" fill="none" stroke="#1e9fff" stroke-width="2.6"/><circle cx="15.5" cy="15.5" r="6.3" fill="#1e9fff"/></svg>
<div class="t" style="left:269px;top:217.25px;font-size:21px;line-height:31.5px;color:#666">是</div>
<svg style="left:328px;top:218px" width="31" height="31" viewBox="0 0 31 31"><circle cx="15.5" cy="15.5" r="14" fill="none" stroke="#c2c2c2" stroke-width="2.6"/></svg>
<div class="t" style="left:372px;top:217.25px;font-size:21px;line-height:31.5px;color:#666">否</div>
<div class="a" style="left:225px;top:283px;width:132px;height:57px;border-radius:7px;background:#7b68ee"></div>
<div class="t" style="left:270px;top:295.25px;font-size:21px;line-height:31.5px;color:#fff;font-weight:bold;-webkit-text-stroke:0.5px #fff">确定</div>
</div>
</div>
<div class="a" style="left:2538px;top:159px;width:22px;height:1040px;background:#fcfcfc"></div>
<svg style="left:2542px;top:167px" width="16" height="8" viewBox="0 0 16 8"><path d="M0.5 8 L8 0.5 L15.5 8 Z" fill="#8c8c8c"/></svg>
<div class="a" style="left:2543px;top:186px;width:13px;height:845px;background:#8c8c8c;border-radius:7px"></div>
<svg style="left:2542px;top:1185px" width="16" height="8" viewBox="0 0 16 8"><path d="M0.5 0 L15.5 0 L8 7.5 Z" fill="#8c8c8c"/></svg>
</body></html>
